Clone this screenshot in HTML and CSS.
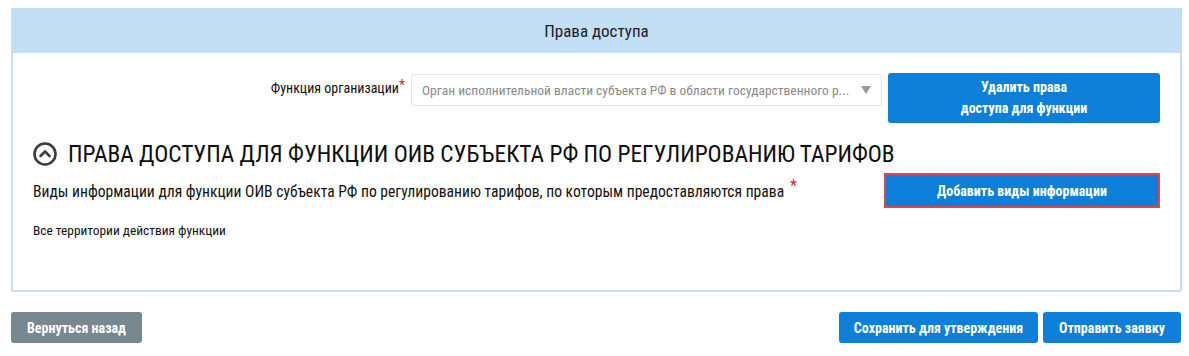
FILE: index.html
```html
<!DOCTYPE html>
<html lang="ru">
<head>
<meta charset="utf-8">
<title>Права доступа</title>
<link rel="stylesheet" href="styles.css">
</head>
<body>
<div class="page">
  <section class="panel">
    <header class="panel-head">Права доступа</header>
    <div class="panel-body">
      <div class="func-row">
        <label class="func-label">Функция организации<span class="req">*</span></label>
        <div class="select">
          <span class="select-text">Орган исполнительной власти субъекта РФ в области государственного р...</span>
          <span class="select-arrow"></span>
        </div>
        <button class="btn btn-blue btn-delete">Удалить права<br>доступа для функции</button>
      </div>
      <h2 class="section-title">
        <svg class="collapse-icon" width="24" height="24" viewBox="0 0 24 24">
          <circle cx="12" cy="12" r="10.5" fill="none" stroke="#3d3d3d" stroke-width="2.6"/>
          <path d="M7.5 14 L12 9.5 L16.5 14" fill="none" stroke="#3d3d3d" stroke-width="2.6" stroke-linecap="round" stroke-linejoin="round"/>
        </svg>
        <span>ПРАВА ДОСТУПА ДЛЯ ФУНКЦИИ ОИВ СУБЪЕКТА РФ ПО РЕГУЛИРОВАНИЮ ТАРИФОВ</span>
      </h2>
      <div class="info-row">
        <div class="info-label">Виды информации для функции ОИВ субъекта РФ по регулированию тарифов, по которым предоставляются права<span class="req req-up">*</span></div>
        <button class="btn btn-blue btn-add">Добавить виды информации</button>
      </div>
      <div class="territory">Все территории действия функции</div>
    </div>
  </section>
  <footer class="actions">
    <button class="btn btn-grey btn-back">Вернуться назад</button>
    <div class="actions-right">
      <button class="btn btn-blue btn-foot btn-save">Сохранить для утверждения</button>
      <button class="btn btn-blue btn-foot btn-send">Отправить заявку</button>
    </div>
  </footer>
</div>
</body>
</html>
```

FILE: styles.css
```css
* { box-sizing: border-box; }
html, body { margin: 0; padding: 0; background: #fff; }
body {
  font-family: "Roboto Condensed", "Roboto", "Liberation Sans", sans-serif;
  font-stretch: condensed;
  color: #1a1a1a;
}
.page { padding: 8px 8px 0 11px; width: 1189px; }
.panel {
  width: 1171px;
  border: 2px solid #c2dff5;
  border-radius: 3px;
  height: 284px;
}
.panel-head {
  background: #c2dff5;
  height: 45px;
  display: flex;
  align-items: center;
  justify-content: center;
  font-size: 17px;
  color: #222;
  margin: -2px -2px 0 -2px;
}
.panel-body { padding: 20px 20px 0 20px; }
.func-row {
  display: flex;
  align-items: flex-start;
  justify-content: flex-end;
}
.func-label {
  font-size: 14px;
  color: #111;
  margin-top: 7px;
  margin-right: 6px;
  white-space: nowrap;
}
.req { color: #d12a2a; font-size: 14px; vertical-align: top; position: relative; top: -3px; }
.select {
  width: 471px;
  height: 32px;
  border: 1px solid #e3e3e3;
  border-radius: 3px;
  display: flex;
  align-items: center;
  padding: 0 10px;
  margin-top: 1px;
  margin-right: 6px;
}
.select-text { flex: 1; font-size: 13.5px; color: #8a8a8a; white-space: nowrap; overflow: hidden; }
.select-arrow {
  width: 0; height: 0;
  border-left: 5px solid transparent;
  border-right: 5px solid transparent;
  border-top: 8px solid #999;
  margin-left: 8px;
}
.btn {
  font-family: inherit;
  font-stretch: inherit;
  border: none;
  border-radius: 3px;
  color: #fff;
  cursor: pointer;
  font-size: 14px;
  white-space: nowrap;
}
.btn-blue { background: #0e7fd8; }
.btn-grey { background: #778891; }
.btn-delete {
  width: 272px;
  height: 50px;
  line-height: 21px;
  font-weight: bold;
  font-size: 14px;
}
.section-title {
  margin: 17px 0 0 0;
  display: flex;
  align-items: center;
  gap: 11px;
  font-weight: normal;
  font-size: 23.4px;
  color: #0d0d0d;
  white-space: nowrap;
}
.collapse-icon { flex: none; }
.info-row {
  display: flex;
  justify-content: space-between;
  align-items: flex-start;
  margin-top: 5px;
}
.info-label { font-size: 15.6px; color: #111; white-space: nowrap; margin-top: 10px; }
.req-up { font-size: 16px; margin-left: 6px; top: -7px; }
.btn-add {
  width: 276px;
  height: 35px;
  border: 2px solid #e0474a;
  border-radius: 0;
  font-weight: bold;
  font-size: 14px;
}
.territory { font-size: 13.4px; color: #111; margin: 15px 0 0 0; }
.actions {
  display: flex;
  justify-content: space-between;
  margin-top: 20px;
  width: 1170px;
}
.actions-right { display: flex; gap: 5px; }
.btn-back { width: 131px; height: 31px; font-weight: bold; }
.btn-foot { height: 31px; font-weight: bold; }
.btn-save { width: 199px; }
.btn-send { width: 138px; }
```
